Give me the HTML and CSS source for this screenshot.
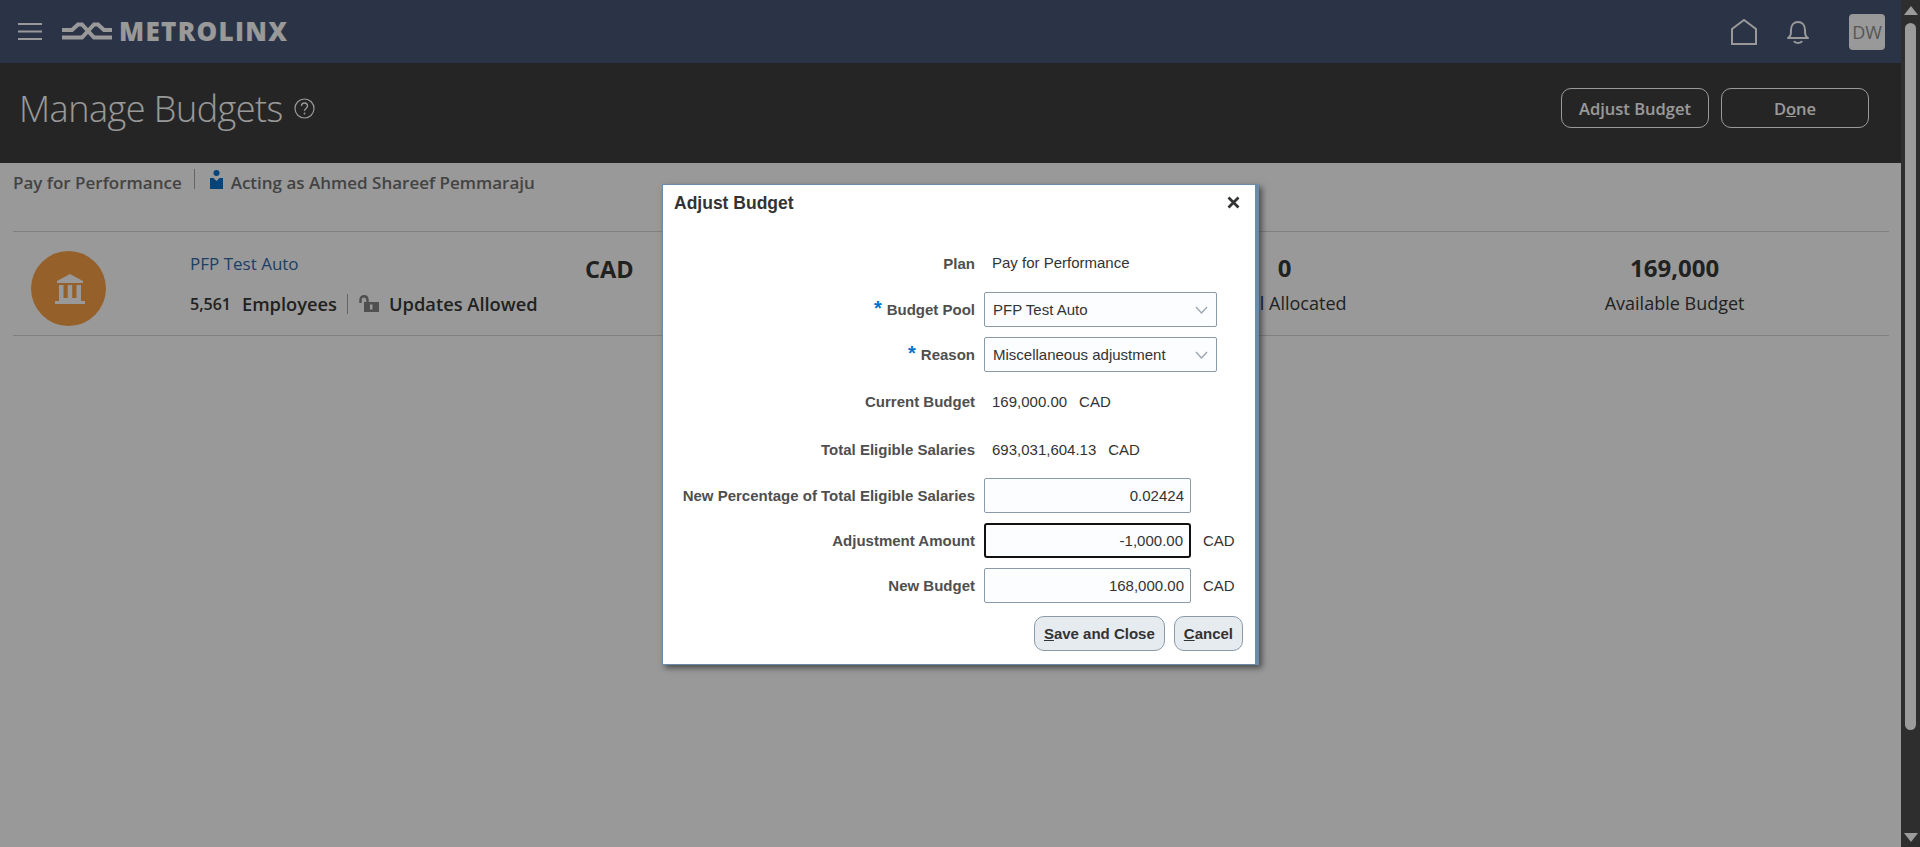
FILE: index.html
```html
<!DOCTYPE html>
<html lang="en">
<head>
    <meta charset="UTF-8">
    <meta name="viewport" content="width=device-width, initial-scale=1.0">
    <title>Manage Budgets</title>
    <link rel="stylesheet" href="styles.css">
</head>
<body>
    <div class="page">
        <!-- Barra superior -->
        <header class="topbar">
            <svg class="menu-icon" viewBox="0 0 24 17">
                <path d="M0 1h24M0 8.500h24M0 16h24" stroke="#fff" stroke-width="2" fill="none"/>
            </svg>
            <svg class="logo-mark" viewBox="0 0 50 19">
                <g stroke="#fff" stroke-width="4" fill="none">
                    <path d="M0 8h10l6-5.500h4L32 15.500h18"/>
                    <path d="M0 15.500h20L32 2.500h4l6 5.500h8"/>
                </g>
            </svg>
            <span class="logo-text">METROLINX</span>
            <div class="topbar-right">
                <svg class="home-icon" viewBox="0 0 26 26">
                    <path d="M1 10 13 1l12 9v15H1z" stroke="#fff" stroke-width="2" fill="none"/>
                </svg>
                <svg class="bell-icon" viewBox="0 0 22 24">
                    <path d="M1 18c3-2 3-4 3-8 0-5 3-8 7-8s7 3 7 8c0 4 0 6 3 8z" stroke="#fff" stroke-width="2" fill="none" stroke-linejoin="round"/>
                    <path d="M7 21c1 2.500 7 2.500 8 0" stroke="#fff" stroke-width="2" fill="none"/>
                </svg>
                <div class="avatar">DW</div>
            </div>
        </header>

        <!-- Titulo -->
        <div class="titlebar">
            <h1 class="page-title">Manage Budgets</h1>
            <svg class="help-icon" viewBox="0 0 21 21">
                <circle cx="10.500" cy="10.500" r="9.500" stroke="#fff" stroke-width="1.200" fill="none"/>
                <path d="M7.500 8c0-4 6-4 6 0 0 2.500-3 2.500-3 5" stroke="#fff" stroke-width="1.300" fill="none"/>
                <circle cx="10.500" cy="15.500" r="0.900" fill="#fff"/>
            </svg>
            <div class="title-actions">
                <button class="btn-outline">Adjust Budget</button>
                <button class="btn-outline">D<u>o</u>ne</button>
            </div>
        </div>

        <div class="breadcrumb">
            <span class="crumb-text">Pay for Performance</span>
            <span class="crumb-sep"></span>
            <svg class="person-icon" viewBox="0 0 13 19">
                <circle cx="6.500" cy="3" r="3" fill="#0572ce"/>
                <path d="M0 8h3.500l3 3 3-3H13v11H0z" fill="#0572ce"/>
            </svg>
            <span class="crumb-text">Acting as Ahmed Shareef Pemmaraju</span>
        </div>

        <div class="pool-row">
            <div class="pool-badge">
                <svg viewBox="0 0 30 30" class="bank-icon">
                    <path d="M15 0 28 7v2H2V7z" fill="#fff"/>
                    <path d="M4 11h4.500v13H4zM12.700 11h4.500v13h-4.500zM21.500 11H26v13h-4.500zM4 24h22v3H4zM0 27h30v3H0z" fill="#fff"/>
                </svg>
            </div>
            <div class="pool-info">
                <a class="pool-name">PFP Test Auto</a>
                <div class="pool-meta">
                    <span class="emp-count">5,561</span>
                    <span>Employees</span>
                    <span class="meta-sep"></span>
                    <svg class="lock-icon" viewBox="0 0 20 18">
                        <path d="M1.500 8V5c0-5 7-5 7 0v2" stroke="#858585" stroke-width="2.400" fill="none"/>
                        <path d="M5 7h15v10H5z" fill="#858585"/>
                        <path d="M11 9.500h2.500v5H11z" fill="#fff"/>
                    </svg>
                    <span>Updates Allowed</span>
                </div>
            </div>
            <div class="pool-currency">CAD</div>
            <div class="stat stat-allocated">
                <div class="stat-value">0</div>
                <div class="stat-label">Total Allocated</div>
            </div>
            <div class="stat stat-available">
                <div class="stat-value">169,000</div>
                <div class="stat-label">Available Budget</div>
            </div>
        </div>

        <div class="scrim"></div>

        <!-- Dialogo -->
        <div class="dialog">
            <div class="dialog-head">
                <span class="dialog-title">Adjust Budget</span>
                <svg class="close-icon" viewBox="0 0 13 13">
                    <path d="M1.500 1.500l10 10M11.500 1.500l-10 10" stroke="#333" stroke-width="2.800" fill="none"/>
                </svg>
            </div>
            <div class="form">
                <label class="nudge">Plan</label>
                <div class="value-line nudge-more">Pay for Performance</div>

                <label><span class="req">*</span> Budget Pool</label>
                <div class="field field-select">PFP Test Auto<svg class="chev" viewBox="0 0 13 8"><path d="M1 1l5.500 6L12 1" stroke="#9aa5ae" stroke-width="1.300" fill="none"/></svg></div>

                <label><span class="req">*</span> Reason</label>
                <div class="field field-select">Miscellaneous adjustment<svg class="chev" viewBox="0 0 13 8"><path d="M1 1l5.500 6L12 1" stroke="#9aa5ae" stroke-width="1.300" fill="none"/></svg></div>

                <label class="nudge">Current Budget</label>
                <div class="value-line nudge"><span>169,000.00</span><span class="cur">CAD</span></div>

                <label class="nudge">Total Eligible Salaries</label>
                <div class="value-line nudge"><span>693,031,604.13</span><span class="cur">CAD</span></div>

                <label>New Percentage of Total Eligible Salaries</label>
                <div class="input-line"><div class="field field-num">0.02424</div></div>

                <label>Adjustment Amount</label>
                <div class="input-line"><div class="field field-num field-focus">-1,000.00</div><span class="cur">CAD</span></div>

                <label>New Budget</label>
                <div class="input-line"><div class="field field-num">168,000.00</div><span class="cur">CAD</span></div>
            </div>
            <div class="dialog-actions">
                <button class="btn-dlg"><u>S</u>ave and Close</button>
                <button class="btn-dlg"><u>C</u>ancel</button>
            </div>
        </div>
    </div>

    <!-- Barra de scroll -->
    <div class="scrollbar">
        <span class="arrow-up"></span>
        <span class="thumb"></span>
        <span class="arrow-down"></span>
    </div>
</body>
</html>
```

FILE: styles.css
```css
* {
    box-sizing: border-box;
}

body {
    margin: 0;
    height: 847px;
    display: flex;
    overflow: hidden;
    background: #fff;
    font-family: "Open Sans", "Noto Sans", sans-serif;
    color: #383838;
}

.page {
    position: relative;
    flex: 1;
    overflow: hidden;
}

/* Barra superior */
.topbar {
    height: 63px;
    background: #465876;
    display: flex;
    align-items: center;
    padding: 0 16px 0 18px;
}

.menu-icon {
    width: 24px;
    height: 17px;
}

.logo-mark {
    width: 50px;
    height: 19px;
    margin-left: 20px;
}

.logo-text {
    margin: 0 0 2px 7px;
    color: #fff;
    font-weight: 800;
    font-size: 26px;
    letter-spacing: 1.300px;
}

.topbar-right {
    margin-left: auto;
    display: flex;
    align-items: center;
}

.home-icon {
    width: 26px;
    height: 26px;
}

.bell-icon {
    width: 22px;
    height: 24px;
    margin-left: 30px;
}

.avatar {
    width: 36px;
    height: 36px;
    margin-left: 40px;
    background: #fff;
    border-radius: 4px;
    color: #8f8f8f;
    font-size: 18px;
    display: flex;
    align-items: center;
    justify-content: center;
}

/* Titulo */
.titlebar {
    height: 100px;
    background: #3f3f3f;
    display: flex;
    align-items: center;
    padding: 0 32px 10px 19px;
}

.page-title {
    margin: 0;
    color: #fff;
    font-weight: 300;
    font-size: 36px;
    letter-spacing: -0.5px;
}

.help-icon {
    width: 21px;
    height: 21px;
    margin: 1px 0 0 11px;
}

.title-actions {
    margin-left: auto;
    display: flex;
    gap: 12px;
}

.btn-outline {
    width: 148px;
    height: 40px;
    background: transparent;
    border: 1px solid #fff;
    border-radius: 10px;
    color: #fff;
    font-family: inherit;
    font-weight: 600;
    font-size: 16.500px;
}

.breadcrumb {
    height: 68px;
    padding: 6px 0 0 13px;
    display: flex;
    align-items: flex-start;
    color: #717171;
    font-weight: 600;
    font-size: 17px;
}

.crumb-text {
    margin-top: 2px;
}

.crumb-sep {
    width: 1px;
    height: 20px;
    margin: 0 15px 0 12px;
    background: #a8a8a8;
}

.person-icon {
    width: 13px;
    height: 19px;
    margin: 1px 8px 0 0;
}

.pool-row {
    position: relative;
    margin: 0 12px 0 13px;
    height: 105px;
    border-top: 1px solid #d6d6d6;
    border-bottom: 1px solid #d6d6d6;
    display: flex;
}

.pool-badge {
    width: 75px;
    height: 75px;
    margin: 19px 0 0 18px;
    border-radius: 50%;
    background: #f8a046;
    display: flex;
    align-items: center;
    justify-content: center;
}

.bank-icon {
    width: 30px;
    height: 30px;
    margin-left: 3px;
}

.pool-info {
    width: 395px;
    margin-left: 84px;
    padding-top: 20px;
}

.pool-name {
    color: #3469aa;
    font-size: 17px;
}

.pool-meta {
    display: flex;
    align-items: center;
    margin-top: 16px;
    font-weight: 600;
    font-size: 18.300px;
}

.emp-count {
    font-size: 16px;
    margin-right: 11px;
}

.meta-sep {
    width: 1px;
    height: 20px;
    margin: 0 11px 0 10px;
    background: #a8a8a8;
}

.lock-icon {
    width: 20px;
    height: 18px;
    margin-right: 10px;
}

.pool-currency {
    padding-top: 21px;
    font-weight: 700;
    font-size: 23.500px;
}

.stat {
    text-align: center;
    padding-top: 19px;
}

.stat-allocated {
    margin-left: 581px;
    width: 140px;
}

.stat-available {
    margin-left: 220px;
    width: 200px;
}

.stat-value {
    font-weight: 700;
    font-size: 24px;
}

.stat-label {
    margin-top: 7px;
    font-size: 18px;
}

.scrim {
    position: absolute;
    inset: 0;
    background: rgba(0, 0, 0, 0.4);
}

/* Dialogo */
.dialog {
    position: absolute;
    left: 662px;
    top: 184px;
    width: 597px;
    height: 481px;
    background: #fff;
    border: 1px solid #6b8bab;
    border-right-width: 4px;
    box-shadow: 3px 3px 6px rgba(0, 0, 0, 0.5);
    font-family: "Liberation Sans", Arial, sans-serif;
    font-size: 15px;
    color: #333;
}

.dialog-head {
    height: 61px;
    padding: 8px 15px 0 11px;
    display: flex;
    justify-content: space-between;
}

.dialog-title {
    font-weight: 700;
    font-size: 17.500px;
}

.close-icon {
    width: 13px;
    height: 13px;
    margin-top: 3px;
}

.form {
    display: grid;
    grid-template-columns: 312px 1fr;
    grid-template-rows: 36px 35px 35px 40px 36px 35px 35px 35px;
    column-gap: 9px;
    row-gap: 10px;
}

.form label {
    display: flex;
    align-items: center;
    justify-content: flex-end;
    gap: 5px;
    font-weight: 700;
    color: #4f4f4f;
}

.form .nudge {
    padding-bottom: 2px;
}

.form .nudge-more {
    padding-bottom: 4px;
}

.req {
    color: #0572ce;
    font-size: 20px;
    margin-top: -3px;
}

.value-line {
    display: flex;
    align-items: center;
    padding-left: 8px;
}

.cur {
    margin-left: 12px;
}

.input-line {
    display: flex;
    align-items: center;
}

.field {
    height: 35px;
    display: flex;
    align-items: center;
    background: #fbfdff;
    border: 1px solid #8a9aa8;
    border-radius: 2px;
    padding: 0 6px 0 8px;
}

.field-select {
    width: 233px;
    justify-content: space-between;
}

.field-num {
    width: 207px;
    justify-content: flex-end;
}

.field-focus {
    border: 2px solid #111;
    border-radius: 3px;
}

.chev {
    width: 13px;
    height: 8px;
    margin-right: 2px;
}

.dialog-actions {
    display: flex;
    justify-content: flex-end;
    gap: 9px;
    padding: 13px 12px 0 0;
}

.btn-dlg {
    height: 35px;
    padding: 0 9px;
    background: #e6ebef;
    border: 1px solid #8a9aa8;
    border-radius: 10px;
    color: #333;
    font-family: inherit;
    font-weight: 700;
    font-size: 15px;
}

/* Barra de scroll */
.scrollbar {
    width: 19px;
    height: 847px;
    background: #2e2e2e;
    display: flex;
    flex-direction: column;
    align-items: center;
    padding-top: 6px;
}

.arrow-up {
    width: 0;
    height: 0;
    border-left: 7px solid transparent;
    border-right: 7px solid transparent;
    border-bottom: 9px solid #9b9b9b;
}

.thumb {
    width: 11px;
    height: 707px;
    margin-top: 8px;
    background: #9b9b9b;
    border-radius: 6px;
}

.arrow-down {
    width: 0;
    height: 0;
    margin-top: 103px;
    border-left: 7px solid transparent;
    border-right: 7px solid transparent;
    border-top: 9px solid #9b9b9b;
}
```
